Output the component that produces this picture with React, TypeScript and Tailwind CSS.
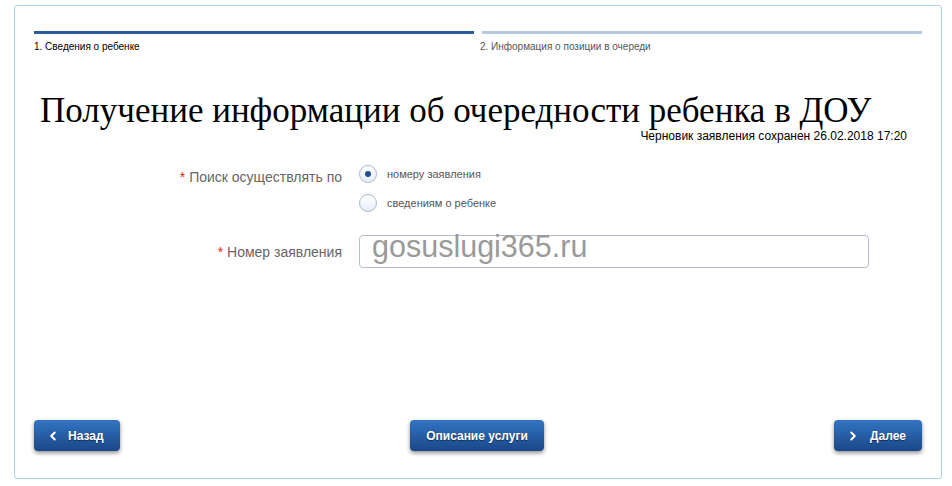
import { ChevronLeft, ChevronRight } from "lucide-react";

function NavButton({ children, className = "" }: { children: React.ReactNode; className?: string }) {
  return (
    <button
      className={`flex h-[31px] items-center rounded-[4px] bg-gradient-to-b from-[#3274c4] to-[#1b4788] text-[12px] font-bold text-white shadow-[0_2px_4px_rgba(0,0,0,0.45)] [text-shadow:0_1px_1px_rgba(0,0,0,0.5)] ${className}`}
    >
      {children}
    </button>
  );
}

function Radio({ checked, label }: { checked?: boolean; label: string }) {
  return (
    <label className="flex items-center gap-[10px]">
      <span className="flex h-[18px] w-[18px] items-center justify-center rounded-full border border-[#a7b8cf] bg-gradient-to-b from-[#ffffff] to-[#e6edf6]">
        {checked && <span className="h-[6px] w-[6px] rounded-full bg-[#1d4f8f]" />}
      </span>
      <span className="text-[11px] text-[#555]">{label}</span>
    </label>
  );
}

export default function App() {
  return (
    <div className="h-[486px] w-[952px] bg-white pl-[14px] pt-[5px] font-['Liberation_Sans',Arial,sans-serif]">
      <div className="flex h-[474px] w-[928px] flex-col rounded-[3px] border border-[#a9d6e8] px-[19px]">
        <div className="mt-[25px] grid grid-cols-2 gap-[8px]">
          <div>
            <div className="h-[3px] bg-[#2d5c9c]" />
            <div className="mt-[5px] text-[10px] text-black">1. Сведения о ребенке</div>
          </div>
          <div>
            <div className="h-[3px] bg-[#b5c9e1]" />
            <div className="mt-[5px] -ml-[2px] text-[10px] text-[#555]">2. Информация о позиции в очереди</div>
          </div>
        </div>

        <h1 className="mt-[41px] pl-[6px] font-['Liberation_Serif','Times_New_Roman',serif] text-[35px] leading-[32px] text-black">
          Получение информации об очередности ребенка в ДОУ
        </h1>
        <div className="mt-[2px] pr-[15px] text-right text-[12px] leading-[14px] text-black">
          Черновик заявления сохранен 26.02.2018 17:20
        </div>

        <div className="mt-[22px] grid grid-cols-[308px_1fr] gap-x-[17px]">
          <div className="pt-[2px] text-right text-[14px] text-[#666]">
            <span className="text-[#e2281f]">*</span> Поиск осуществлять по
          </div>
          <div className="flex flex-col gap-[11px]">
            <Radio checked label="номеру заявления" />
            <Radio label="сведениям о ребенке" />
          </div>

          <div className="mt-[23px] pt-[7px] text-right text-[14px] text-[#666]">
            <span className="text-[#e2281f]">*</span> Номер заявления
          </div>
          <div className="relative mt-[23px]">
            <input className="h-[33px] w-[510px] rounded-[4px] border border-[#b3bccb] bg-white outline-none" />
            <span className="absolute -top-[9px] left-[13px] text-[30.5px] leading-[40px] text-[#9a9a9a]">
              gosuslugi365.ru
            </span>
          </div>
        </div>

        <div className="mt-auto mb-[27px] flex items-center justify-between">
          <NavButton className="w-[86px] pl-[12px]">
            <ChevronLeft size={14} strokeWidth={3.5} className="mr-[8px]" />
            Назад
          </NavButton>
          <NavButton className="w-[134px] justify-center">Описание услуги</NavButton>
          <NavButton className="w-[88px] pl-[12px]">
            <ChevronRight size={14} strokeWidth={3.5} className="mr-[10px]" />
            Далее
          </NavButton>
        </div>
      </div>
    </div>
  );
}
